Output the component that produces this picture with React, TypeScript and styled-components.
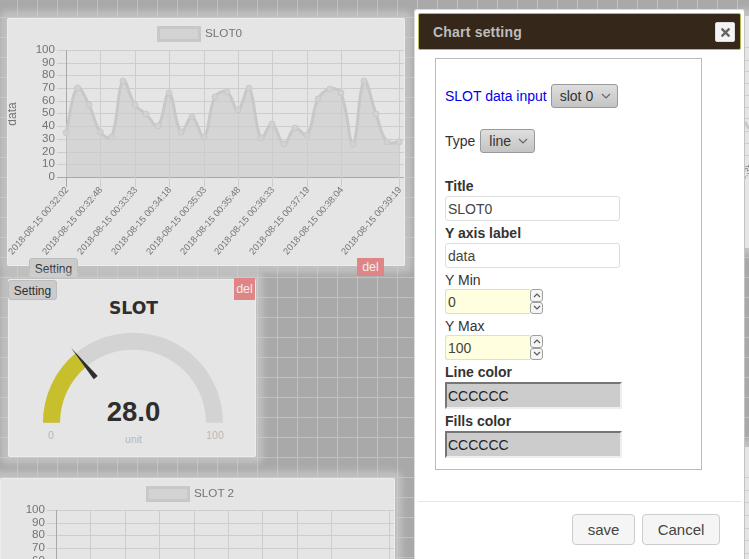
import React from 'react';
import styled, { createGlobalStyle } from 'styled-components';
import { FaTimes } from 'react-icons/fa';

const Global = createGlobalStyle`
  html, body { margin: 0; padding: 0; height: 100%; overflow: hidden; }
  body { font-family: "Liberation Sans", Arial, sans-serif; font-size: 14px; color: #333; }
  #root { height: 100%; }
`;

const Canvas = styled.div`
  position: relative;
  width: 749px;
  height: 559px;
  overflow: hidden;
  background-color: #a9a9a9;
  background-image:
    linear-gradient(#c0c0c0 1px, transparent 1px),
    linear-gradient(90deg, #c0c0c0 1px, transparent 1px);
  background-size: 20px 20px;
  background-position: -3px -3px;
`;

const Card = styled.div<{ $x: number; $y: number; $w: number; $h: number; $z?: number }>`
  position: absolute;
  left: ${p => p.$x}px;
  top: ${p => p.$y}px;
  width: ${p => p.$w}px;
  height: ${p => p.$h}px;
  z-index: ${p => p.$z ?? 1};
  background: #e5e5e5;
  border-radius: 2px;
  box-shadow: 0 0 6px 7px rgba(208, 208, 208, 0.6);
  &::after {
    content: '';
    position: absolute;
    inset: 0;
    border: 1px solid #ececec;
    border-radius: 2px;
    pointer-events: none;
  }
`;

const ChartSvg = styled.svg<{ $soft?: boolean }>`
  position: absolute;
  left: 0;
  top: 0;
  display: block;
  filter: ${p => (p.$soft ? 'blur(0.35px)' : 'none')};
`;

const SettingButton = styled.div<{ $x: number; $y: number; $z?: number }>`
  position: absolute;
  left: ${p => p.$x}px;
  top: ${p => p.$y}px;
  z-index: ${p => p.$z ?? 1};
  width: 49px;
  height: 20px;
  box-sizing: border-box;
  border: 1px solid #bdbdbd;
  border-radius: 3px;
  background: #cbcbcb;
  color: #2e2e2e;
  font-size: 12px;
  line-height: 20px;
  text-align: center;
`;

const DeleteButton = styled.div<{ $x: number; $y: number; $w: number; $h: number; $z?: number }>`
  position: absolute;
  left: ${p => p.$x}px;
  top: ${p => p.$y}px;
  z-index: ${p => p.$z ?? 1};
  width: ${p => p.$w}px;
  height: ${p => p.$h}px;
  background: #df8585;
  color: #eee;
  font-size: 12.5px;
  line-height: ${p => p.$h}px;
  text-align: center;
`;

const EdgeCard = styled.div<{ $y: number; $h: number }>`
  position: absolute;
  left: 745px;
  top: ${p => p.$y}px;
  width: 20px;
  height: ${p => p.$h}px;
  background: #e5e5e5;
  box-shadow: 0 0 6px 7px rgba(208, 208, 208, 0.6);
`;

const Modal = styled.div`
  position: absolute;
  z-index: 10;
  left: 414px;
  top: 9px;
  width: 331px;
  height: 560px;
  box-sizing: border-box;
  padding: 3px;
  background: #fff;
  border: 1px solid #dcdcdc;
  border-right-color: #c4c4c4;
  border-radius: 3px 3px 0 0;
  display: flex;
  flex-direction: column;
`;

const ModalHeader = styled.div`
  height: 37px;
  flex: none;
  box-sizing: border-box;
  border: 1px solid #b7ba55;
  border-radius: 2px;
  background: #35281a;
  display: flex;
  align-items: center;
  justify-content: space-between;
  padding: 0 5px 0 14px;
`;

const ModalTitle = styled.span`
  color: #bdbdbd;
  font-weight: bold;
  font-size: 14px;
  letter-spacing: 0.2px;
`;

const CloseButton = styled.div`
  width: 20px;
  height: 20px;
  border-radius: 2px;
  background: #f4f4f4;
  border: 1px solid #ddd;
  box-sizing: border-box;
  display: flex;
  align-items: center;
  justify-content: center;
  margin-top: 1px;
  color: #666;
`;

const FormBox = styled.div`
  margin: 8px 0 0 17px;
  width: 267px;
  height: 412px;
  flex: none;
  box-sizing: border-box;
  border: 1px solid #bbb;
  padding: 25px 0 0 9px;
  display: flex;
  flex-direction: column;
  align-items: flex-start;
  color: #333;
`;

const InlineRow = styled.div<{ $mb: number; $gap: number }>`
  display: flex;
  align-items: center;
  gap: ${p => p.$gap}px;
  height: 24px;
  margin-bottom: ${p => p.$mb}px;
`;

const BlueLabel = styled.span`
  color: #0000ee;
`;

const SelectBox = styled.div<{ $w: number }>`
  width: ${p => p.$w}px;
  height: 24px;
  box-sizing: border-box;
  border: 1px solid #999;
  border-radius: 3px;
  background: linear-gradient(#dedede, #c4c4c4);
  display: flex;
  align-items: center;
  justify-content: space-between;
  padding: 0 6px 0 8px;
  color: #333;
`;

const FieldLabel = styled.div<{ $bold?: boolean }>`
  height: ${p => (p.$bold ? 19 : 18)}px;
  line-height: 18px;
  font-weight: ${p => (p.$bold ? 'bold' : 'normal')};
`;

const TextField = styled.div`
  width: 175px;
  height: 25px;
  box-sizing: border-box;
  border: 1px solid #ddd;
  border-radius: 3px;
  background: #fff;
  padding-left: 2px;
  line-height: 25px;
  color: #444;
  margin-bottom: 3px;
`;

const NumberRow = styled.div`
  display: flex;
  align-items: stretch;
  height: 25px;
  margin-bottom: 3px;
`;

const NumberField = styled.div`
  width: 85px;
  box-sizing: border-box;
  border: 1px solid #ddd;
  border-right: 0;
  border-radius: 3px 0 0 3px;
  background: #ffffdf;
  padding-left: 2px;
  line-height: 25px;
  color: #444;
`;

const Spinner = styled.div`
  width: 13px;
  display: flex;
  flex-direction: column;
`;

const SpinPart = styled.div`
  flex: 1;
  box-sizing: border-box;
  border: 1px solid #a0a0a0;
  border-radius: 3px;
  background: #f5f5f5;
  display: flex;
  align-items: center;
  justify-content: center;
`;

const ColorField = styled.div`
  width: 177px;
  height: 27px;
  box-sizing: border-box;
  border-style: solid;
  border-width: 2px;
  border-color: #767676 #eee #eee #767676;
  background: #ccc;
  padding-left: 1px;
  line-height: 25px;
  color: #222;
  margin-bottom: 3px;
`;

const ModalFooter = styled.div`
  margin-top: 31px;
  border-top: 1px solid #e5e5e5;
  padding: 12px 21px 0 0;
  display: flex;
  justify-content: flex-end;
  gap: 7px;
`;

const FooterButton = styled.div<{ $w: number }>`
  width: ${p => p.$w}px;
  height: 31px;
  box-sizing: border-box;
  border: 1px solid #ccc;
  border-radius: 4px;
  background: #f5f5f5;
  color: #444;
  font-size: 15px;
  line-height: 29px;
  text-align: center;
`;

type Pt = [number, number];

const points: Pt[] = [
  [66, 132.7], [77.5, 88], [89, 105], [100.3, 132], [111.5, 137], [123, 81], [135, 105], [146, 114],
  [158, 126], [169, 93], [181, 132], [192, 117], [204, 137], [215, 97], [227, 92], [238, 110],
  [249, 88], [261, 138], [272, 124], [284, 144], [295, 128], [307, 135], [318, 99], [330, 89],
  [341, 93], [353, 144], [364, 81], [376, 114], [387, 142], [399, 142],
];

const bezierPath = (pts: Pt[], tension = 0.4) => {
  const ctrl = pts.map((p, i) => {
    const prev = pts[i - 1] ?? p;
    const next = pts[i + 1] ?? p;
    const d01 = Math.hypot(p[0] - prev[0], p[1] - prev[1]);
    const d12 = Math.hypot(next[0] - p[0], next[1] - p[1]);
    const total = d01 + d12 || 1;
    const fa = (tension * d01) / total;
    const fb = (tension * d12) / total;
    return {
      a: [p[0] - fa * (next[0] - prev[0]), p[1] - fa * (next[1] - prev[1])] as Pt,
      b: [p[0] + fb * (next[0] - prev[0]), p[1] + fb * (next[1] - prev[1])] as Pt,
    };
  });
  let d = `M${pts[0][0]} ${pts[0][1]}`;
  for (let i = 1; i < pts.length; i++) {
    const c1 = ctrl[i - 1].b;
    const c2 = ctrl[i].a;
    d += `C${c1[0].toFixed(2)} ${c1[1].toFixed(2)} ${c2[0].toFixed(2)} ${c2[1].toFixed(2)} ${pts[i][0]} ${pts[i][1]}`;
  }
  return d;
};

const linePath = bezierPath(points);
const areaPath = `${linePath}L399 177L66 177Z`;

const mainXs = [66.5, 100.5, 135.5, 169.5, 204.5, 238.5, 272.5, 307.5, 341.5, 399.5];
const mainLabels = [
  '2018-08-15 00:32:02', '2018-08-15 00:32:48', '2018-08-15 00:33:33', '2018-08-15 00:34:18',
  '2018-08-15 00:35:03', '2018-08-15 00:35:48', '2018-08-15 00:36:33', '2018-08-15 00:37:19',
  '2018-08-15 00:38:04', '2018-08-15 00:39:19',
];
const ticks = [100, 90, 80, 70, 60, 50, 40, 30, 20, 10, 0];
const mainYs = [50.5, 63.5, 75.5, 88.5, 101.5, 113.5, 126.5, 139.5, 152.5, 164.5, 177.5];

const TextTone = '#747474';
const GridTone = '#cdcdcd';

const MainChart = () => (
  <ChartSvg $soft width={398} height={248} viewBox="7 18 398 248">
    <rect x="158.5" y="27.5" width="41" height="13" fill="#d3d3d3" stroke="#c8c8c8" strokeWidth="3" />
    <text x="205" y="37" fontSize="11.7" fill={TextTone} fontFamily="Liberation Sans">SLOT0</text>
    <text transform="translate(16 114) rotate(-90)" textAnchor="middle" fontSize="12" fill={TextTone} fontFamily="Liberation Sans">data</text>
    {mainYs.map((y, i) => (
      <g key={y}>
        <line x1="57" x2="405" y1={y} y2={y} stroke={i === 10 ? '#a8a8a8' : GridTone} />
        <text x="55" y={y + 2.6} textAnchor="end" fontSize="11.6" fill={TextTone} fontFamily="Liberation Sans">{ticks[i]}</text>
      </g>
    ))}
    {mainXs.map((x, i) => (
      <g key={x}>
        <line x1={x} x2={x} y1="50" y2="187" stroke={i === 0 ? '#a8a8a8' : GridTone} />
        <text
          transform={`translate(${x + 2.5} 190) rotate(-49)`}
          textAnchor="end"
          fontSize="9.3"
          fill={TextTone}
          fontFamily="Liberation Sans"
        >
          {mainLabels[i]}
        </text>
      </g>
    ))}
    <path d={areaPath} fill="#cccccc" fillOpacity="0.62" />
    <path d={linePath} fill="none" stroke="#c8c8c8" strokeWidth="3" />
    {points.map(p => (
      <circle key={p[0]} cx={p[0]} cy={p[1]} r="3" fill="#d2d2d2" stroke="#c8c8c8" />
    ))}
  </ChartSvg>
);

const secondXs = [56.5, 90.5, 125.5, 159.5, 194.5, 228.5, 262.5, 297.5, 331.5, 389.5];
const secondYs = [510.5, 523.5, 535.5, 548.5, 561.5];

const SecondChart = () => (
  <ChartSvg $soft width={395} height={81} viewBox="0 478 395 81">
    <rect x="147.5" y="487.5" width="41" height="13" fill="#d3d3d3" stroke="#c8c8c8" strokeWidth="3" />
    <text x="194" y="497" fontSize="11.7" fill={TextTone} fontFamily="Liberation Sans">SLOT 2</text>
    {secondYs.map((y, i) => (
      <g key={y}>
        <line x1="47" x2="395" y1={y} y2={y} stroke={GridTone} />
        <text x="45" y={y + 2.6} textAnchor="end" fontSize="11.6" fill={TextTone} fontFamily="Liberation Sans">{ticks[i]}</text>
      </g>
    ))}
    {secondXs.map((x, i) => (
      <line key={x} x1={x} x2={x} y1="510" y2="559" stroke={i === 0 ? '#a8a8a8' : GridTone} />
    ))}
  </ChartSvg>
);

const cx = 133;
const cy = 422.7;
const polar = (r: number, frac: number): Pt => {
  const a = Math.PI * frac;
  return [cx - r * Math.cos(a), cy - r * Math.sin(a)];
};
const arc = (from: number, to: number) => {
  const [ax, ay] = polar(90, from);
  const [bx, by] = polar(90, to);
  const [ix, iy] = polar(73, to);
  const [jx, jy] = polar(73, from);
  return `M${ax} ${ay}A90 90 0 0 1 ${bx} ${by}L${ix} ${iy}A73 73 0 0 0 ${jx} ${jy}Z`;
};
const needle = () => {
  const tip = polar(97, 0.28);
  const base = polar(58.5, 0.28);
  const nx = Math.sin(Math.PI * 0.28) * 2.6;
  const ny = -Math.cos(Math.PI * 0.28) * 2.6;
  return `${tip[0]},${tip[1]} ${base[0] + nx},${base[1] + ny} ${base[0] - nx},${base[1] - ny}`;
};

const Gauge = () => (
  <ChartSvg width={248} height={178} viewBox="8 279 248 178">
    <text x="133.5" y="313.7" textAnchor="middle" fontSize="17.2" fontWeight="bold" fill="#2e2e2e" fontFamily="DejaVu Sans">SLOT</text>
    <path d={arc(0, 1)} fill="#d3d3d3" />
    <path d={arc(0, 0.28)} fill="#c7bf2b" />
    <polygon points={needle()} fill="#2e2e2e" />
    <text x="133.5" y="420.5" textAnchor="middle" fontSize="27.5" fontWeight="bold" fill="#2e2e2e" fontFamily="Liberation Sans">28.0</text>
    <text x="51" y="439" textAnchor="middle" fontSize="10.4" fill="#b8b8b8" fontFamily="Liberation Sans">0</text>
    <text x="215" y="439" textAnchor="middle" fontSize="10.4" fill="#b8b8b8" fontFamily="Liberation Sans">100</text>
    <text x="133.5" y="443" textAnchor="middle" fontSize="10.4" fill="#b4b8c2" fontFamily="Liberation Sans">unit</text>
  </ChartSvg>
);

const upperEdgeLines = [47, 60, 71, 83, 95, 107, 118, 131, 143, 155, 166];
const lowerEdgeLines = [477, 490, 502, 515, 528, 540, 553];

const EdgeLines = ({ ys, top, h }: { ys: number[]; top: number; h: number }) => (
  <ChartSvg $soft width={20} height={h} viewBox={`745 ${top} 20 ${h}`}>
    {ys.map((y, i) => (
      <line key={y} x1="745" x2="765" y1={y + 0.5} y2={y + 0.5} stroke={i === 10 ? '#a8a8a8' : GridTone} />
    ))}
    {top < 100 && <path d="M745 122L749 129" stroke="#c8c8c8" strokeWidth="3" />}
    {top < 100 && (
      <text transform="translate(755 167) rotate(-50)" textAnchor="end" fontSize="9.3" fill={TextTone} fontFamily="Liberation Sans">
        2018-08-15 00:33:33
      </text>
    )}
  </ChartSvg>
);

const Chevron = () => (
  <svg width="10" height="6" viewBox="0 0 10 6">
    <path d="M1 1L5 5L9 1" fill="none" stroke="#666" strokeWidth="1.2" />
  </svg>
);

const SpinIcon = ({ up }: { up?: boolean }) => (
  <svg width="8" height="5" viewBox="0 0 8 5">
    <path d={up ? 'M1 4L4 1L7 4' : 'M1 1L4 4L7 1'} fill="none" stroke="#555" strokeWidth="1.1" />
  </svg>
);

const NumberInput = ({ value }: { value: string }) => (
  <NumberRow>
    <NumberField>{value}</NumberField>
    <Spinner>
      <SpinPart><SpinIcon up /></SpinPart>
      <SpinPart><SpinIcon /></SpinPart>
    </Spinner>
  </NumberRow>
);

export default function App() {
  return (
    <Canvas>
      <Global />
      <Card $x={7} $y={18} $w={398} $h={248}><MainChart /></Card>
      <SettingButton $x={29} $y={258} $z={1}>Setting</SettingButton>
      <DeleteButton $x={357} $y={258} $w={27} $h={18} $z={1}>del</DeleteButton>
      <Card $x={8} $y={279} $w={248} $h={178} $z={2}><Gauge /></Card>
      <SettingButton $x={8} $y={280} $z={3}>Setting</SettingButton>
      <DeleteButton $x={234} $y={278} $w={21} $h={22} $z={3}>del</DeleteButton>
      <Card $x={0} $y={478} $w={395} $h={90}><SecondChart /></Card>
      <EdgeCard $y={16} $h={232}><EdgeLines ys={upperEdgeLines} top={16} h={232} /></EdgeCard>
      <EdgeCard $y={447} $h={120}><EdgeLines ys={lowerEdgeLines} top={447} h={120} /></EdgeCard>
      <Modal>
        <ModalHeader>
          <ModalTitle>Chart setting</ModalTitle>
          <CloseButton><FaTimes size={13} /></CloseButton>
        </ModalHeader>
        <FormBox>
          <InlineRow $mb={21} $gap={4}>
            <BlueLabel>SLOT data input</BlueLabel>
            <SelectBox $w={67}>slot 0 <Chevron /></SelectBox>
          </InlineRow>
          <InlineRow $mb={24} $gap={5}>
            <span>Type</span>
            <SelectBox $w={55}>line <Chevron /></SelectBox>
          </InlineRow>
          <FieldLabel $bold>Title</FieldLabel>
          <TextField>SLOT0</TextField>
          <FieldLabel $bold>Y axis label</FieldLabel>
          <TextField>data</TextField>
          <FieldLabel>Y Min</FieldLabel>
          <NumberInput value="0" />
          <FieldLabel>Y Max</FieldLabel>
          <NumberInput value="100" />
          <FieldLabel $bold>Line color</FieldLabel>
          <ColorField>CCCCCC</ColorField>
          <FieldLabel $bold>Fills color</FieldLabel>
          <ColorField>CCCCCC</ColorField>
        </FormBox>
        <ModalFooter>
          <FooterButton $w={63}>save</FooterButton>
          <FooterButton $w={78}>Cancel</FooterButton>
        </ModalFooter>
      </Modal>
    </Canvas>
  );
}
